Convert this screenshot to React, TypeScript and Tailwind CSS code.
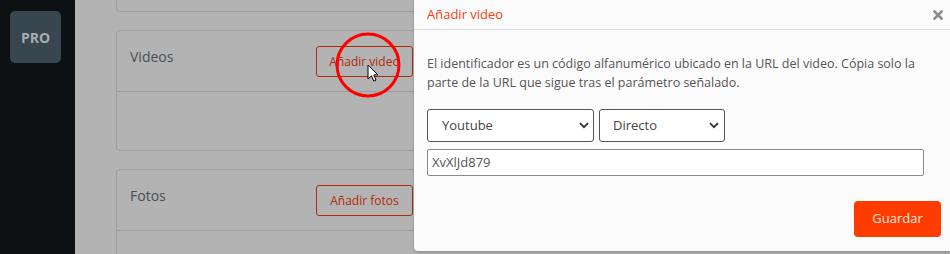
import React from 'react';

const font = { fontFamily: '"Open Sans", "Noto Sans", sans-serif' };

const Card: React.FC<{ title: string; action: string; className?: string }> = ({ title, action, className }) => (
  <div className={`w-[830px] shrink-0 rounded-[4px] border border-[#9d9d9d] bg-[#b3b3b3] ${className ?? ''}`}>
    <div className="flex h-[61px] items-start justify-between border-b border-[#9d9d9d] pl-[13px] pr-[532px]">
      <span className="mt-[15px] text-[14px] text-[#4a5056]">{title}</span>
      <button className="mt-[15px] h-[31px] w-[97px] rounded-[3px] border border-[#b32a08] text-[12px] text-[#b32a08]">
        {action}
      </button>
    </div>
    <div className="h-[58px]" />
  </div>
);

const Chevron = () => (
  <svg width="10" height="7" viewBox="0 0 10 7" className="text-[#333]">
    <path d="M1 1.2l4 4 4-4" fill="none" stroke="currentColor" strokeWidth="1.8" />
  </svg>
);

export default function App() {
  return (
    <div className="relative flex h-[254px] w-[950px] overflow-hidden bg-[#b3b3b3]" style={font}>
      {/* sidebar */}
      <div className="w-[75px] shrink-0 bg-[#0e1114] pl-[10px] pt-[11px]">
        <div className="flex h-[52px] w-[51px] items-center justify-center rounded-[5px] bg-[#37464f] text-[14px] font-bold text-[#a8acae]">
          PRO
        </div>
      </div>

      {/* content behind the overlay */}
      <div className="flex flex-col pl-[41px]">
        <div className="-mt-[20px] h-[32px] w-[830px] shrink-0 rounded-[4px] border border-[#9d9d9d]" />
        <Card title="Videos" action="Añadir video" className="mt-[18px]" />
        <Card title="Fotos" action="Añadir fotos" className="mt-[18px]" />
      </div>

      {/* highlight circle + cursor */}
      <svg className="absolute left-[334px] top-[31px]" width="70" height="70" viewBox="0 0 70 70">
        <circle cx="34" cy="34" r="31" fill="none" stroke="#ff0000" strokeWidth="3" />
      </svg>
      <svg className="absolute left-[367px] top-[64px]" width="12" height="19" viewBox="0 0 12 19">
        <path d="M1 1v14l3.5-3.2 2.3 5.3 2.2-1-2.2-5.2H11z" fill="#fff" stroke="#000" strokeWidth="1" strokeLinejoin="round" />
      </svg>

      {/* modal */}
      <div className="absolute left-[414px] top-[-3px] h-[254px] w-[540px] rounded-[4px] bg-[#fbfbfb] shadow-[0_1px_3px_rgba(0,0,0,0.25)]">
        <div className="flex h-[33px] items-center justify-between border-b border-[#d9d9d9] pl-[13px] pr-[11px] pt-[3px]">
          <span className="text-[13px] text-[#ff3c0f]">Añadir video</span>
          <svg width="10" height="10" viewBox="0 0 10 10">
            <path d="M1.5 1.5l7 7M8.5 1.5l-7 7" stroke="#8a8a8a" strokeWidth="2.6" strokeLinecap="square" />
          </svg>
        </div>
        <div className="pl-[13px] pr-[27px] pt-[24px]">
          <p className="text-[12.5px] leading-[19px] text-[#555]">
            El identificador es un código alfanumérico ubicado en la URL del video. Cópia solo la parte de la URL que sigue tras el parámetro señalado.
          </p>
          <div className="mt-[17px] flex gap-[5px]">
            <div className="flex h-[33px] w-[167px] items-center justify-between rounded-[3px] border border-[#555] bg-white pl-[14px] pr-[4px] text-[13px] text-[#444]">
              Youtube
              <Chevron />
            </div>
            <div className="flex h-[33px] w-[126px] items-center justify-between rounded-[3px] border border-[#555] bg-white pl-[13px] pr-[5px] text-[13px] text-[#444]">
              Directo
              <Chevron />
            </div>
          </div>
          <div className="mt-[7px] flex h-[27px] w-[497px] items-center rounded-[2px] border border-[#8a8a8a] bg-white pl-[4px] text-[13px] text-[#555]">
            XvXlJd879
          </div>
          <div className="mt-[25px] flex justify-end">
            <button className="mr-[-14px] h-[36px] w-[87px] rounded-[4px] bg-[#ff3c00] text-[13px] text-[#fbe9e2]">
              Guardar
            </button>
          </div>
        </div>
      </div>
    </div>
  );
}
